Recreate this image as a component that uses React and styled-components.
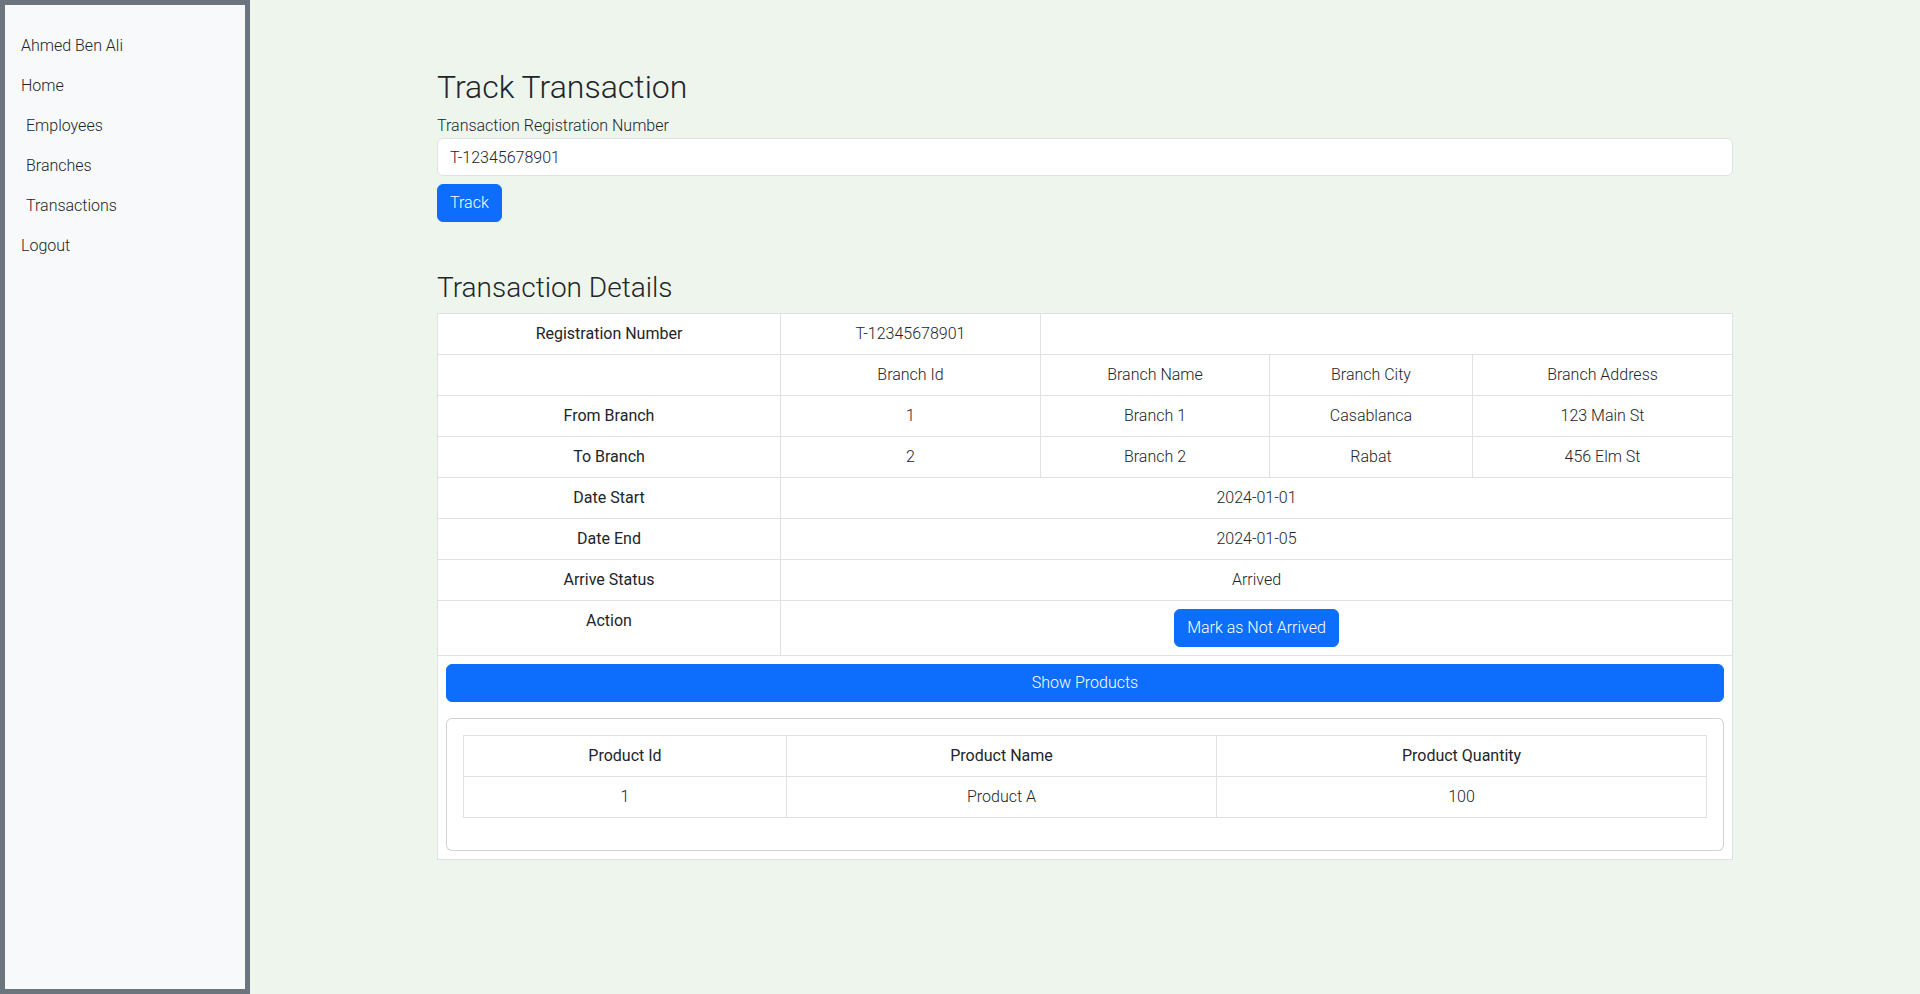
import React from "react";
import styled, { createGlobalStyle } from "styled-components";

const GlobalStyle = createGlobalStyle`
  html, body {
    margin: 0;
    padding: 0;
  }
  body {
    font-family: Roboto, "Noto Sans", "Liberation Sans", sans-serif;
    font-weight: 300;
    font-size: 16px;
    line-height: 1.5;
    color: #212529;
    background: #eef5ed;
  }
  * {
    box-sizing: border-box;
  }
`;

const Layout = styled.div`
  display: flex;
  min-height: 994px;
`;

const Sidebar = styled.nav`
  width: 250px;
  flex-shrink: 0;
  height: 994px;
  background: #f8f9fa;
  border: 5px solid #6c757d;
  padding-top: 21px;
  display: flex;
  flex-direction: column;
`;

const NavItem = styled.a`
  display: block;
  padding: 8px 16px 8px ${(p) => (p.$sub ? "21px" : "16px")};
  color: #212529;
  text-decoration: none;
  line-height: 24px;
`;

const Main = styled.main`
  flex: 1;
  background: #eef5ed;
`;

const Container = styled.div`
  max-width: 1320px;
  margin: 0 auto;
  padding: 68px 12px 40px;
`;

const Title = styled.h2`
  font-size: 32px;
  font-weight: 300;
  line-height: 1.2;
  margin: 0 0 8px;
`;

const SubTitle = styled.h3`
  font-size: 28px;
  font-weight: 300;
  line-height: 1.2;
  margin: 49px 0 8px;
`;

const Label = styled.label`
  display: block;
  line-height: 24px;
`;

const Input = styled.input`
  display: block;
  width: 100%;
  height: 38px;
  padding: 6px 12px;
  font-family: inherit;
  font-weight: 300;
  font-size: 16px;
  color: #212529;
  background: #fff;
  border: 1px solid #dee2e6;
  border-radius: 6px;
  outline: none;
`;

const Button = styled.button`
  display: ${(p) => (p.$block ? "block" : "inline-block")};
  width: ${(p) => (p.$block ? "100%" : "auto")};
  height: 38px;
  margin-top: ${(p) => p.$mt || "0"};
  padding: 6px 12px;
  font-family: inherit;
  font-weight: 300;
  font-size: 16px;
  line-height: 24px;
  color: #fff;
  background: #0d6efd;
  border: 1px solid #0d6efd;
  border-radius: 6px;
  cursor: pointer;
`;

const Table = styled.table`
  width: 100%;
  border-collapse: collapse;
  table-layout: fixed;
  background: #fff;
  margin-bottom: ${(p) => p.$mb || "0"};
`;

const Th = styled.th`
  border: 1px solid #dee2e6;
  padding: 8px;
  font-weight: 400;
  text-align: center;
  vertical-align: top;
  line-height: 24px;
  color: #212529;
`;

const Td = styled.td`
  border: 1px solid #dee2e6;
  padding: 8px;
  text-align: center;
  vertical-align: top;
  line-height: 24px;
  color: #212529;
`;

const Card = styled.div`
  margin-top: 16px;
  background: #fff;
  border: 1px solid rgba(0, 0, 0, 0.175);
  border-radius: 6px;
  padding: 16px;
`;

const branches = [
  { label: "From Branch", id: 1, name: "Branch 1", city: "Casablanca", address: "123 Main St" },
  { label: "To Branch", id: 2, name: "Branch 2", city: "Rabat", address: "456 Elm St" },
];

export default function App() {
  return (
    <>
      <GlobalStyle />
      <Layout>
        <Sidebar>
          <NavItem>Ahmed Ben Ali</NavItem>
          <NavItem>Home</NavItem>
          <NavItem $sub>Employees</NavItem>
          <NavItem $sub>Branches</NavItem>
          <NavItem $sub>Transactions</NavItem>
          <NavItem>Logout</NavItem>
        </Sidebar>
        <Main>
          <Container>
            <Title>Track Transaction</Title>
            <Label>Transaction Registration Number</Label>
            <Input defaultValue="T-12345678901" />
            <Button $mt="8px">Track</Button>

            <SubTitle>Transaction Details</SubTitle>
            <Table>
              <colgroup>
                <col style={{ width: 343 }} />
                <col style={{ width: 260 }} />
                <col style={{ width: 229 }} />
                <col style={{ width: 203 }} />
                <col />
              </colgroup>
              <tbody>
                <tr>
                  <Th>Registration Number</Th>
                  <Td>T-12345678901</Td>
                  <Td colSpan={3}></Td>
                </tr>
                <tr>
                  <Th></Th>
                  <Td>Branch Id</Td>
                  <Td>Branch Name</Td>
                  <Td>Branch City</Td>
                  <Td>Branch Address</Td>
                </tr>
                {branches.map((b) => (
                  <tr key={b.label}>
                    <Th>{b.label}</Th>
                    <Td>{b.id}</Td>
                    <Td>{b.name}</Td>
                    <Td>{b.city}</Td>
                    <Td>{b.address}</Td>
                  </tr>
                ))}
                <tr>
                  <Th>Date Start</Th>
                  <Td colSpan={4}>2024-01-01</Td>
                </tr>
                <tr>
                  <Th>Date End</Th>
                  <Td colSpan={4}>2024-01-05</Td>
                </tr>
                <tr>
                  <Th>Arrive Status</Th>
                  <Td colSpan={4}>Arrived</Td>
                </tr>
                <tr>
                  <Th>Action</Th>
                  <Td colSpan={4}>
                    <Button>Mark as Not Arrived</Button>
                  </Td>
                </tr>
                <tr>
                  <Td colSpan={5}>
                    <Button $block>Show Products</Button>
                    <Card>
                      <Table $mb="16px">
                        <colgroup>
                          <col style={{ width: 323 }} />
                          <col style={{ width: 430 }} />
                          <col />
                        </colgroup>
                        <thead>
                          <tr>
                            <Th>Product Id</Th>
                            <Th>Product Name</Th>
                            <Th>Product Quantity</Th>
                          </tr>
                        </thead>
                        <tbody>
                          <tr>
                            <Td>1</Td>
                            <Td>Product A</Td>
                            <Td>100</Td>
                          </tr>
                        </tbody>
                      </Table>
                    </Card>
                  </Td>
                </tr>
              </tbody>
            </Table>
          </Container>
        </Main>
      </Layout>
    </>
  );
}
